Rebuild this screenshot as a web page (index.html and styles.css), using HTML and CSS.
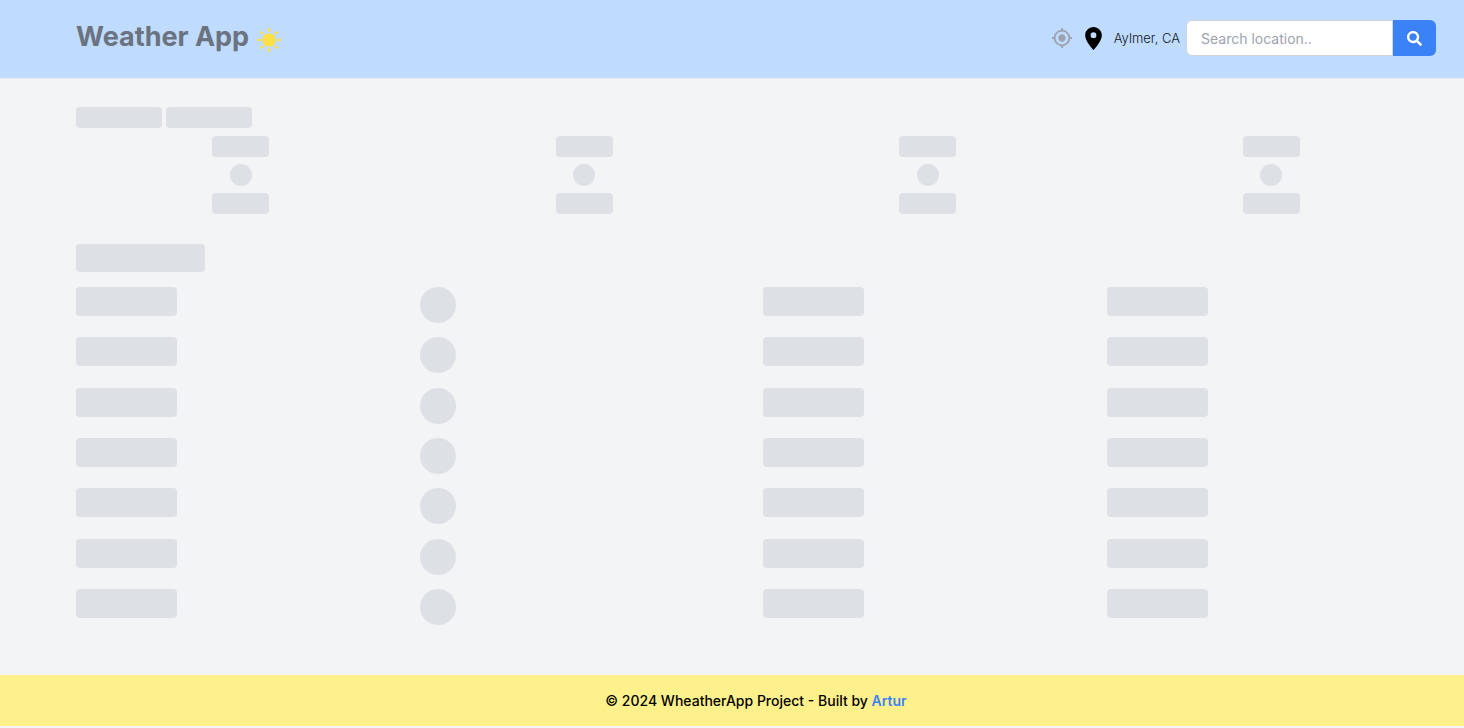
FILE: index.html
```html
<!DOCTYPE html>
<html lang="en">
<head>
<meta charset="utf-8">
<meta name="viewport" content="width=device-width, initial-scale=1">
<title>Weather App</title>
<link rel="stylesheet" href="styles.css">
</head>
<body>
<header class="header">
  <h1 class="brand">Weather App
    <svg class="sun" viewBox="0 0 24 24" aria-hidden="true">
      <rect x="5.5" y="5.5" width="13" height="13" rx="5.5" fill="currentColor"/>
      <g stroke="currentColor" stroke-width="2.4" stroke-linecap="round">
        <path d="M12 1.2v1.6M12 21.2v1.6M1.2 12h1.6M21.2 12h1.6M4.4 4.4l.8.8M18.8 18.8l.8.8M4.4 19.6l.8-.8M18.8 5.2l.8-.8"/>
      </g>
    </svg>
  </h1>
  <div class="tools">
    <button class="icon-button" type="button" aria-label="Use my location">
      <svg class="target" viewBox="0 0 24 24" fill="currentColor" aria-hidden="true"><path d="M12 8c-2.21 0-4 1.79-4 4s1.79 4 4 4 4-1.79 4-4-1.79-4-4-4zm8.94 3A8.994 8.994 0 0 0 13 3.06V1h-2v2.06A8.994 8.994 0 0 0 3.06 11H1v2h2.06A8.994 8.994 0 0 0 11 20.94V23h2v-2.06A8.994 8.994 0 0 0 20.94 13H23v-2h-2.06zM12 19c-3.87 0-7-3.13-7-7s3.13-7 7-7 7 3.13 7 7-3.13 7-7 7z"/></svg>
    </button>
    <svg class="pin" viewBox="0 0 24 24" fill="currentColor" aria-hidden="true"><path d="M12 1C7.6 1 4 4.5 4 9c0 5.6 8 14 8 14s8-8.400 8-14c0-4.500-3.600-8-8-8zm0 10.600a2.800 2.800 0 1 1 0-5.600 2.800 2.800 0 0 1 0 5.600z"/></svg>
    <span class="place">Aylmer, CA</span>
    <form class="search">
      <input class="search-input" type="text" placeholder="Search location.." aria-label="Search location">
      <button class="search-button" type="button" aria-label="Search">
        <svg class="glass" viewBox="0 0 512 512" fill="currentColor" aria-hidden="true"><path d="M505 442.700L405.300 343c-4.500-4.500-10.600-7-17-7H372c27.600-35.300 44-79.700 44-128C416 93.100 322.900 0 208 0S0 93.100 0 208s93.100 208 208 208c48.300 0 92.700-16.400 128-44v16.300c0 6.400 2.500 12.500 7 17l99.700 99.700c9.400 9.400 24.600 9.400 33.900 0l28.300-28.300c9.400-9.400 9.400-24.600.1-34zM208 336c-70.700 0-128-57.200-128-128 0-70.700 57.200-128 128-128 70.700 0 128 57.200 128 128 0 70.700-57.200 128-128 128z"/></svg>
      </button>
    </form>
  </div>
</header>
<main class="main" aria-busy="true">
  <div class="labels"><div class="bone label"></div><div class="bone label"></div></div>
  <div class="hours">
    <div class="hour"><div class="bone chip"></div><div class="bone dot"></div><div class="bone chip"></div></div>
    <div class="hour"><div class="bone chip"></div><div class="bone dot"></div><div class="bone chip"></div></div>
    <div class="hour"><div class="bone chip"></div><div class="bone dot"></div><div class="bone chip"></div></div>
    <div class="hour"><div class="bone chip"></div><div class="bone dot"></div><div class="bone chip"></div></div>
  </div>
  <div class="bone heading"></div>
  <div class="days">
    <div class="day"><div class="bone bar"></div><div class="bone disc"></div><div class="bone bar"></div><div class="bone bar"></div></div>
    <div class="day"><div class="bone bar"></div><div class="bone disc"></div><div class="bone bar"></div><div class="bone bar"></div></div>
    <div class="day"><div class="bone bar"></div><div class="bone disc"></div><div class="bone bar"></div><div class="bone bar"></div></div>
    <div class="day"><div class="bone bar"></div><div class="bone disc"></div><div class="bone bar"></div><div class="bone bar"></div></div>
    <div class="day"><div class="bone bar"></div><div class="bone disc"></div><div class="bone bar"></div><div class="bone bar"></div></div>
    <div class="day"><div class="bone bar"></div><div class="bone disc"></div><div class="bone bar"></div><div class="bone bar"></div></div>
    <div class="day"><div class="bone bar"></div><div class="bone disc"></div><div class="bone bar"></div><div class="bone bar"></div></div>
  </div>
</main>
<footer class="footer">© 2024 WheatherApp Project - Built by <a class="author" href="#">Artur</a></footer>
</body>
</html>
```
FILE: styles.css
```css
* {
  box-sizing: border-box;
}

body {
  display: flex;
  flex-direction: column;
  min-height: calc(100vh - 2px);
  margin: 0;
  background: #f3f4f6;
  color: #000;
  font-family: Inter, "Liberation Sans", sans-serif;
}

.header {
  display: flex;
  align-items: flex-start;
  justify-content: space-between;
  padding: 20px 28px 22px 76px;
  background: #bfdbfe;
  box-shadow: 0 1px 1px rgba(0, 0, 0, 0.04);
}

.brand {
  display: flex;
  align-items: center;
  gap: 8px;
  margin: 0;
  color: #6b7280;
  font-size: 27px;
  font-weight: 700;
  line-height: 34px;
}

.sun {
  width: 24px;
  height: 24px;
  margin-top: 5px;
  color: #fde047;
}

.tools {
  display: flex;
  align-items: center;
}

.icon-button {
  display: flex;
  padding: 0;
  border: 0;
  background: none;
  color: #9ca3af;
}

.target {
  width: 22px;
  height: 22px;
}

.pin {
  width: 25px;
  height: 25px;
  margin: 0 8px;
}

.place {
  margin-right: 6px;
  color: #111827;
  font-size: 13px;
  font-weight: 300;
  line-height: 18px;
}

.search {
  display: flex;
  height: 36px;
}

.search-input {
  width: 207px;
  padding: 0 14px;
  border: 1px solid #d1d5db;
  border-radius: 6px 0 0 6px;
  background: #fff;
  font: 400 14px Inter, "Liberation Sans", sans-serif;
}

.search-input::placeholder {
  color: #9ca3af;
}

.search-button {
  display: flex;
  align-items: center;
  padding: 0 14px;
  border: 0;
  border-radius: 0 6px 6px 0;
  background: #3b82f6;
  color: #fff;
}

.glass {
  width: 15px;
  height: 15px;
}

.main {
  display: flex;
  flex: 1;
  flex-direction: column;
  padding: 29px 28px 50px 76px;
}

.bone {
  border-radius: 4px;
  background: #dde0e5;
}

.labels {
  display: flex;
  gap: 4px;
  margin-bottom: 8px;
}

.label {
  width: 86px;
  height: 21px;
}

.hours,
.day {
  display: grid;
  grid-template-columns: repeat(4, 1fr);
  column-gap: 14px;
}

.hour {
  display: flex;
  flex-direction: column;
  align-items: center;
  gap: 7px;
}

.chip {
  width: 57px;
  height: 21px;
}

.dot {
  width: 22px;
  height: 22px;
  border-radius: 50%;
}

.heading {
  width: 129px;
  height: 28px;
  margin: 30px 0 15px;
}

.days {
  display: flex;
  flex: 1;
  flex-direction: column;
  justify-content: space-between;
  gap: 14px;
}

.bar {
  width: 101px;
  height: 29px;
}

.disc {
  width: 36px;
  height: 36px;
  border-radius: 50%;
}

.footer {
  padding: 16px 28px 15px 76px;
  background: #fef08a;
  font-size: 14px;
  font-weight: 500;
  line-height: 20px;
  text-align: center;
}

.author {
  color: #3b82f6;
  font-weight: 600;
  text-decoration: none;
}
```
